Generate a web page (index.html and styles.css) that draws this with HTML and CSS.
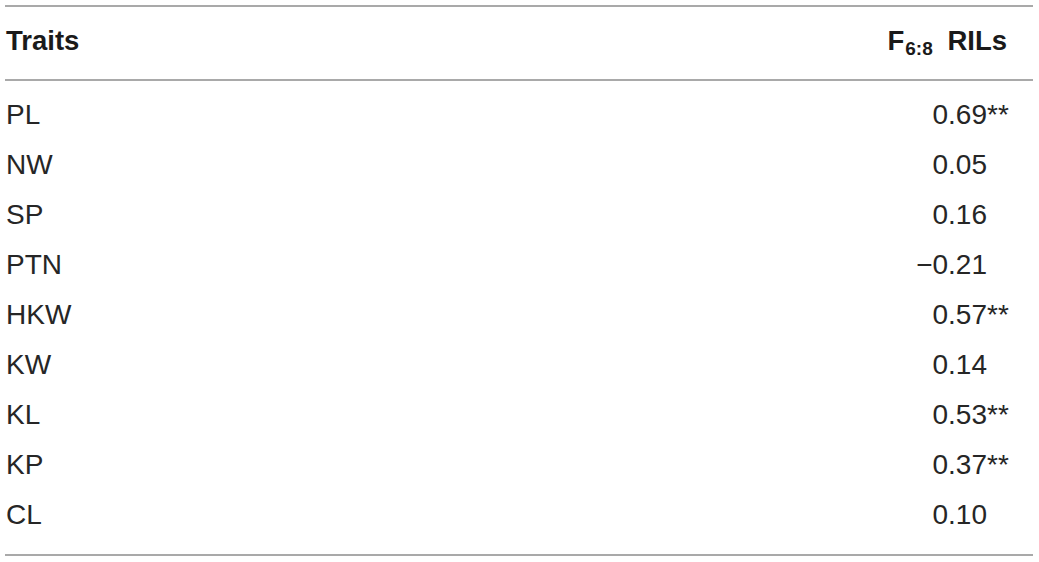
FILE: index.html
```html
<!DOCTYPE html>
<html>
<head>
<meta charset="utf-8">
<link rel="stylesheet" href="styles.css">
</head>
<body>
<table class="traits">
  <thead>
    <tr>
      <th class="c-name">Traits</th>
      <th class="c-val">F<sub>6:8</sub> RILs</th>
    </tr>
  </thead>
  <tbody>
    <tr class="first"><td class="c-name">PL</td><td class="c-val">0.69<span class="sig">**</span></td></tr>
    <tr><td class="c-name">NW</td><td class="c-val">0.05</td></tr>
    <tr><td class="c-name">SP</td><td class="c-val">0.16</td></tr>
    <tr><td class="c-name">PTN</td><td class="c-val">−0.21</td></tr>
    <tr><td class="c-name">HKW</td><td class="c-val">0.57<span class="sig">**</span></td></tr>
    <tr><td class="c-name">KW</td><td class="c-val">0.14</td></tr>
    <tr><td class="c-name">KL</td><td class="c-val">0.53<span class="sig">**</span></td></tr>
    <tr><td class="c-name">KP</td><td class="c-val">0.37<span class="sig">**</span></td></tr>
    <tr class="last"><td class="c-name">CL</td><td class="c-val">0.10</td></tr>
  </tbody>
</table>
</body>
</html>
```
FILE: styles.css
```css
html, body {
  margin: 0;
  padding: 0;
  background: #ffffff;
}
body {
  padding: 5px 6px 0 5px;
  font-family: "Liberation Sans", Arial, sans-serif;
  color: #1f1f1f;
}
.traits {
  width: 1028px;
  border-collapse: collapse;
  border-top: 2px solid #a9a9a9;
  border-bottom: 2px solid #a9a9a9;
}
.traits th {
  font-weight: bold;
  font-size: 27.5px;
  line-height: 40px;
  padding: 14px 0 18px 1px;
  border-bottom: 2px solid #a9a9a9;
  color: #1a1a1a;
}
.traits th.c-name { text-align: left; }
.traits th.c-val { text-align: right; padding-right: 26px; }
.traits th sub {
  font-size: 19px;
  line-height: 0;
  vertical-align: -5px;
  margin-left: 1px;
  margin-right: 7px;
}
.traits td {
  font-size: 28px;
  line-height: 50px;
  height: 50px;
  padding: 0 0 0 1px;
  color: #262626;
}
.traits td.c-name { text-align: left; }
.traits td.c-val { text-align: right; padding-right: 46px; }
.traits tr.first td { padding-top: 9px; }
.traits tr.last td { padding-bottom: 14px; }
.sig {
  display: inline-block;
  width: 0;
  white-space: nowrap;
}
```
